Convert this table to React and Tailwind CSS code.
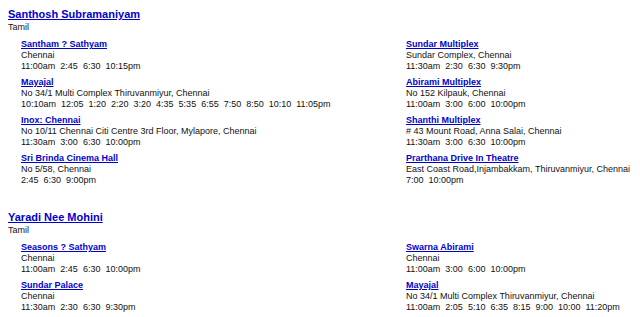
const films = [
  {
    title: "Santhosh Subramaniyam",
    lang: "Tamil",
    left: [
      { name: "Santham ? Sathyam", addr: "Chennai", times: "11:00am  2:45  6:30  10:15pm" },
      { name: "Mayajal", addr: "No 34/1 Multi Complex Thiruvanmiyur, Chennai", times: "10:10am  12:05  1:20  2:20  3:20  4:35  5:35  6:55  7:50  8:50  10:10  11:05pm" },
      { name: "Inox: Chennai", addr: "No 10/11 Chennai Citi Centre 3rd Floor, Mylapore, Chennai", times: "11:30am  3:00  6:30  10:00pm" },
      { name: "Sri Brinda Cinema Hall", addr: "No 5/58, Chennai", times: "2:45  6:30  9:00pm" },
    ],
    right: [
      { name: "Sundar Multiplex", addr: "Sundar Complex, Chennai", times: "11:30am  2:30  6:30  9:30pm" },
      { name: "Abirami Multiplex", addr: "No 152 Kilpauk, Chennai", times: "11:00am  3:00  6:00  10:00pm" },
      { name: "Shanthi Multiplex", addr: "# 43 Mount Road, Anna Salai, Chennai", times: "11:30am  3:00  6:30  10:00pm" },
      { name: "Prarthana Drive In Theatre", addr: "East Coast Road,Injambakkam, Thiruvanmiyur, Chennai", times: "7:00  10:00pm" },
    ],
  },
  {
    title: "Yaradi Nee Mohini",
    lang: "Tamil",
    left: [
      { name: "Seasons ? Sathyam", addr: "Chennai", times: "11:00am  2:45  6:30  10:00pm" },
      { name: "Sundar Palace", addr: "Chennai", times: "11:30am  2:30  6:30  9:30pm" },
    ],
    right: [
      { name: "Swarna Abirami", addr: "Chennai", times: "11:00am  3:00  6:00  10:00pm" },
      { name: "Mayajal", addr: "No 34/1 Multi Complex Thiruvanmiyur, Chennai", times: "11:00am  2:05  5:10  6:35  8:15  9:00  10:00  11:20pm" },
    ],
  },
]

function Theatre({ t }) {
  return <div className="mb-[5px]">
    <a href="#" className="block font-bold text-[#0000cc] underline leading-[11px]">{t.name}</a>
    <div className="leading-[11px] text-[#111]">{t.addr}</div>
    <div className="leading-[11px] text-[#111] whitespace-pre">{t.times}</div>
  </div>
}

export default function App() {
  return <div className="w-[640px] h-[317px] overflow-hidden bg-white px-2 pt-[7px] text-[9px] font-['Liberation_Sans',Arial,sans-serif]">
    {films.map((f, i) => (
      <div key={i} className="mb-[19px]">
        <a href="#" className="block font-bold text-[11px] leading-[15px] text-[#0000cc] underline">{f.title}</a>
        <div className="leading-[11px] text-[#111]">{f.lang}</div>
        <div className="grid grid-cols-[385px_1fr] pl-[13px] pt-[6px]">
          <div>{f.left.map((t, j) => <Theatre key={j} t={t} />)}</div>
          <div>{f.right.map((t, j) => <Theatre key={j} t={t} />)}</div>
        </div>
      </div>
    ))}
  </div>
}
